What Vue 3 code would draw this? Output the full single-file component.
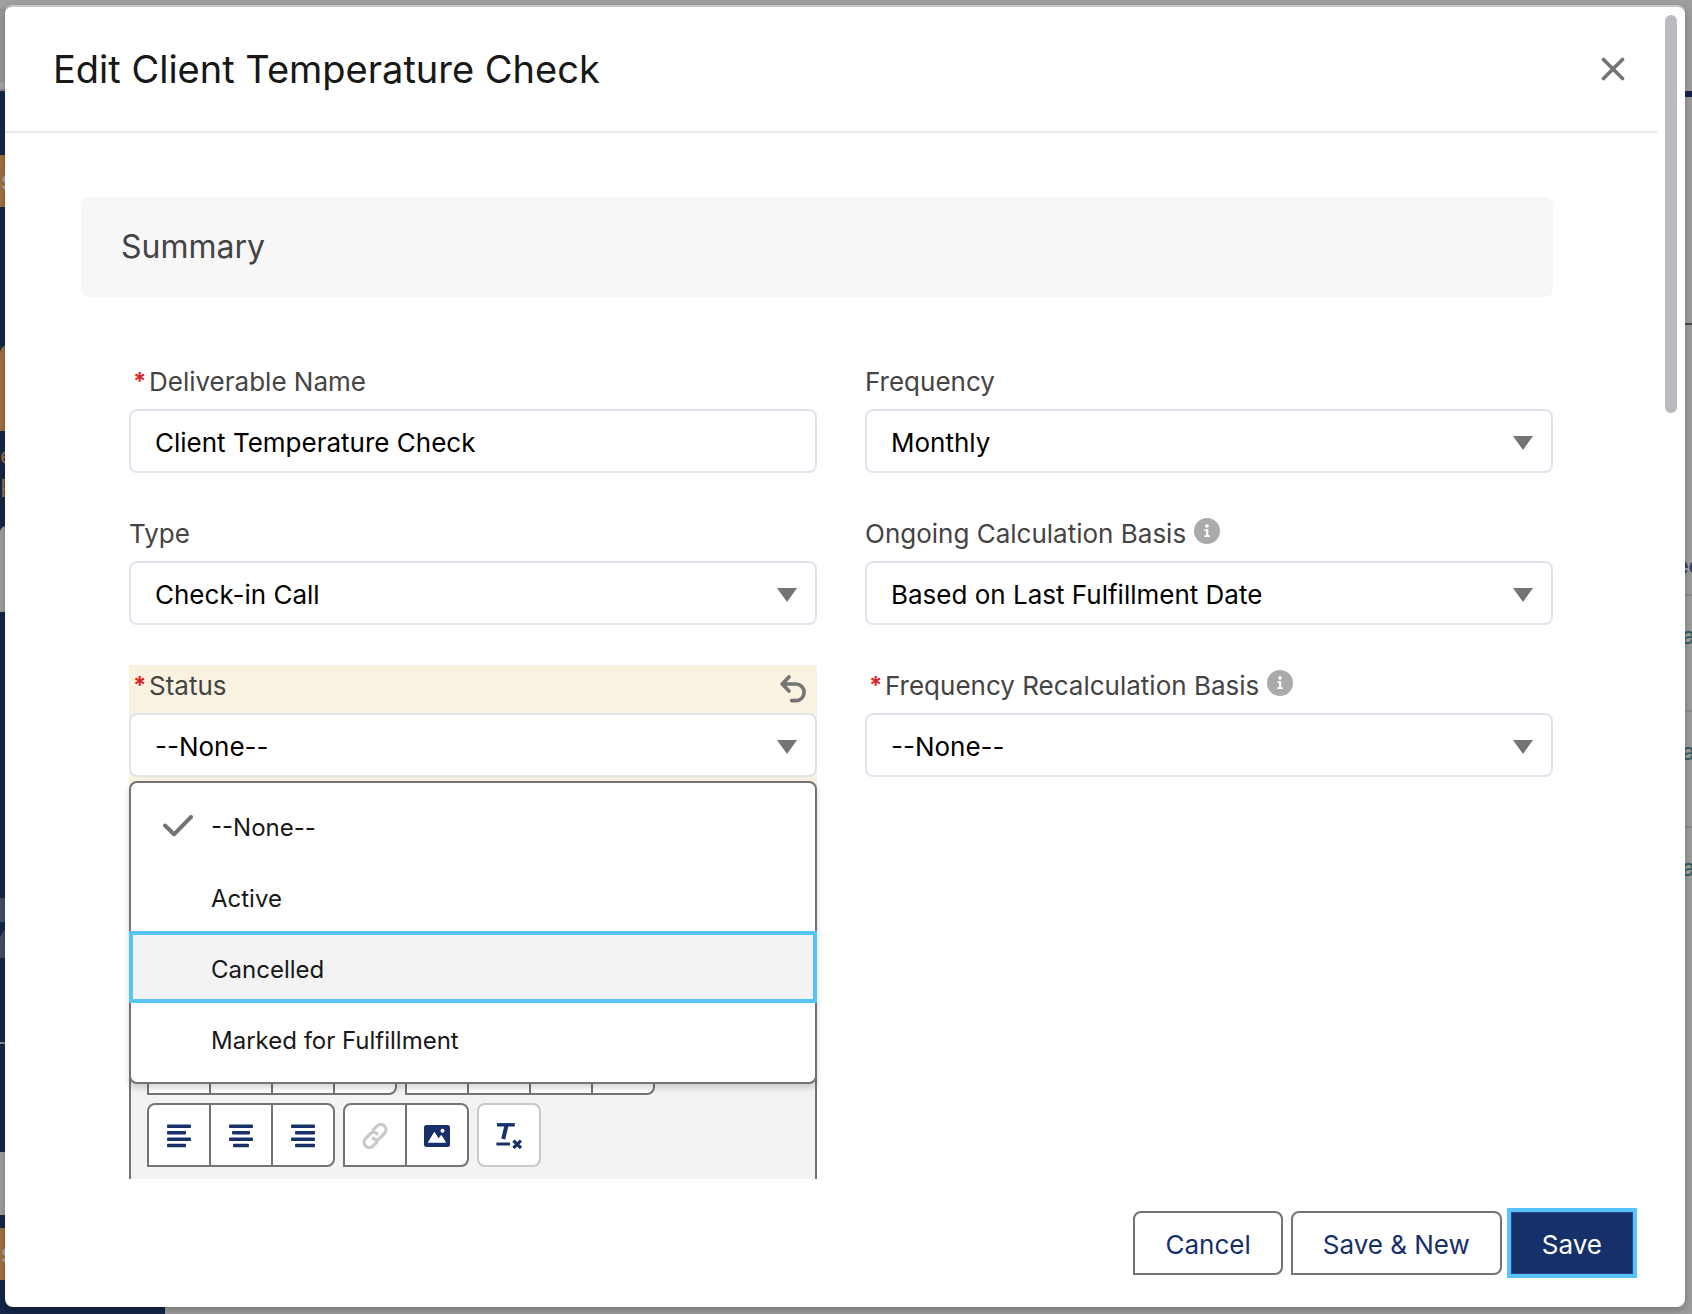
<script setup>
import { ref } from 'vue'

const deliverableName = ref('Client Temperature Check')
const frequency = ref('Monthly')
const type = ref('Check-in Call')
const basis = ref('Based on Last Fulfillment Date')
const status = ref('--None--')
const recalculation = ref('--None--')

const statusOptions = ['--None--', 'Active', 'Cancelled', 'Marked for Fulfillment']
const focusedOption = ref('Cancelled')

const alignments = [
  { name: 'Align left', bars: [[0, 24], [0, 19], [0, 24], [0, 19]] },
  { name: 'Align center', bars: [[0, 24], [3, 18], [0, 24], [4, 16]] },
  { name: 'Align right', bars: [[0, 24], [4, 20], [0, 24], [4, 20]] },
]
const textGroups = [
  ['Bold', 'Italic', 'Underline', 'Strikethrough'],
  ['Bulleted list', 'Numbered list', 'Indent', 'Outdent'],
]
</script>

<template>
  <div class="page">
    <div class="backdrop" aria-hidden="true">
      <div class="side">
        <i class="b top"></i>
        <i class="b topline"></i>
        <i class="b header"></i>
        <i class="b under"></i>
        <i class="b navy h64"></i>
        <i class="b orange tag">s</i>
        <i class="b navy h138"></i>
        <i class="b orange logo"></i>
        <i class="b navy word">e</i>
        <i class="b navy word tall">P</i>
        <i class="b card"></i>
        <i class="b navy h286"></i>
        <i class="b slate"></i>
        <i class="b navy h3"></i>
        <i class="b slate peak"></i>
        <i class="b navy h84"></i>
        <i class="b hair"></i>
        <i class="b navy h108"></i>
        <i class="b grey"></i>
        <i class="b navy h13"></i>
        <i class="b orange tag">s</i>
        <i class="b navy rest"></i>
      </div>
      <div class="other">
        <i class="o head"></i>
        <i class="o bar"></i>
        <i class="o first"></i>
        <i class="o blank"></i>
        <i class="o heading">ec</i>
        <i class="o row">a</i>
        <i class="o row">a</i>
        <i class="o row last">a</i>
      </div>
    </div>

    <form class="modal" role="dialog" aria-labelledby="title" @submit.prevent>
      <header class="modal-head">
        <h1 id="title">Edit Client Temperature Check</h1>
        <button type="button" class="close" aria-label="Close">
          <svg viewBox="0 0 24 24" width="24" height="24"><path d="M2.5 2.5l19 19M21.5 2.5l-19 19" fill="none" stroke="#747474" stroke-width="3.6" stroke-linecap="round" /></svg>
        </button>
      </header>

      <div class="modal-body">
        <h2 class="section">Summary</h2>
        <div class="fields">
          <div class="field">
            <div class="label-row required">
              <abbr>*</abbr><label for="name">Deliverable Name</label>
            </div>
            <input id="name" v-model="deliverableName" type="text" class="control" />
          </div>

          <div class="field">
            <div class="label-row"><label for="frequency">Frequency</label></div>
            <div class="picker">
              <select id="frequency" v-model="frequency" class="control"><option>Monthly</option></select>
              <svg class="arrow" viewBox="0 0 20 14" width="20" height="14"><path d="M0 0h20L10 14z" /></svg>
            </div>
          </div>

          <div class="field">
            <div class="label-row"><label for="type">Type</label></div>
            <div class="picker">
              <select id="type" v-model="type" class="control"><option>Check-in Call</option></select>
              <svg class="arrow" viewBox="0 0 20 14" width="20" height="14"><path d="M0 0h20L10 14z" /></svg>
            </div>
          </div>

          <div class="field">
            <div class="label-row">
              <label for="basis">Ongoing Calculation Basis</label>
              <svg class="info" viewBox="0 0 26 26" width="26" height="26"><circle cx="13" cy="13" r="13" fill="#aaa" /><circle cx="13" cy="8" r="1.8" fill="#fff" /><path d="M10.5 11.3h3.8v6h1.6v1.7h-5.600v-1.7h1.7v-4.3h-1.5z" fill="#fff" /></svg>
            </div>
            <div class="picker">
              <select id="basis" v-model="basis" class="control"><option>Based on Last Fulfillment Date</option></select>
              <svg class="arrow" viewBox="0 0 20 14" width="20" height="14"><path d="M0 0h20L10 14z" /></svg>
            </div>
          </div>

          <div class="field changed">
            <div class="label-row required">
              <abbr>*</abbr><label for="status">Status</label>
              <button type="button" class="undo" aria-label="Undo">
                <svg viewBox="0 0 26 28" width="26" height="28"><path d="M9 2L2.2 9 9 16M2.8 9H16a8 8.2 0 0 1 0 16.6h-4.4" fill="none" stroke="#747474" stroke-width="3.6" stroke-linecap="round" stroke-linejoin="round" /></svg>
              </button>
            </div>
            <div class="picker">
              <select id="status" v-model="status" class="control">
                <option v-for="option in statusOptions" :key="option">{{ option }}</option>
              </select>
              <svg class="arrow" viewBox="0 0 20 14" width="20" height="14"><path d="M0 0h20L10 14z" /></svg>
              <ul class="menu" role="listbox" aria-label="Status">
                <li
                  v-for="option in statusOptions"
                  :key="option"
                  role="option"
                  :aria-selected="option === status"
                  :class="{ focused: option === focusedOption }"
                  @click="status = option"
                >
                  <span class="tick">
                    <svg v-if="option === status" viewBox="0 0 30 22" width="30" height="22"><path d="M2 10.5l9 8.8L28 2" fill="none" stroke="#747474" stroke-width="4" stroke-linecap="round" stroke-linejoin="round" /></svg>
                  </span>
                  {{ option }}
                </li>
              </ul>
            </div>
          </div>

          <div class="field">
            <div class="label-row required">
              <abbr>*</abbr><label for="recalc">Frequency Recalculation Basis</label>
              <svg class="info" viewBox="0 0 26 26" width="26" height="26"><circle cx="13" cy="13" r="13" fill="#aaa" /><circle cx="13" cy="8" r="1.8" fill="#fff" /><path d="M10.5 11.3h3.8v6h1.6v1.7h-5.600v-1.7h1.7v-4.3h-1.5z" fill="#fff" /></svg>
            </div>
            <div class="picker">
              <select id="recalc" v-model="recalculation" class="control"><option>--None--</option></select>
              <svg class="arrow" viewBox="0 0 20 14" width="20" height="14"><path d="M0 0h20L10 14z" /></svg>
            </div>
          </div>

          <div class="editor">
            <div class="tools">
              <div v-for="(group, i) in textGroups" :key="i" class="group">
                <button v-for="name in group" :key="name" type="button" :aria-label="name"></button>
              </div>
            </div>
            <div class="tools">
              <div class="group">
                <button v-for="a in alignments" :key="a.name" type="button" :aria-label="a.name">
                  <svg viewBox="0 0 24 24" width="24" height="24">
                    <rect v-for="(bar, i) in a.bars" :key="i" :x="bar[0]" :y="0.6 + i * 6.4" :width="bar[1]" height="3.5" rx="1" />
                  </svg>
                </button>
              </div>
              <div class="group">
                <button type="button" aria-label="Link" disabled>
                  <svg viewBox="0 0 26 26" width="26" height="26"><g fill="none" stroke="#c9c9c9" stroke-width="3.2" stroke-linecap="round"><path d="M11.2 6.8l3.7-3.700a5.1 5.1 0 0 1 7.600 7.200l-4.600 4.800a5 5 0 0 1-6.900.2" /><path d="M14.800 19.200l-3.700 3.700a5.100 5.100 0 0 1-7.600-7.200l4.600-4.800a5 5 0 0 1 6.900-.2" /></g></svg>
                </button>
                <button type="button" aria-label="Image">
                  <svg viewBox="0 0 26 22" width="26" height="22"><path fill-rule="evenodd" d="M2.5 0h21A2.5 2.5 0 0 1 26 2.500v17a2.500 2.500 0 0 1-2.500 2.500h-21A2.500 2.500 0 0 1 0 19.500v-17A2.500 2.500 0 0 1 2.500 0zM18.500 3.800a2 2 0 1 0 .01 0zM4.600 17.800h16.800q.9 0 .4-.9l-4-6.400q-.6-.8-1.200 0l-2 2.800-3.600-5.800q-.6-.8-1.200 0L4.100 16.900q-.4.9.5.9z" /></svg>
                </button>
              </div>
              <div class="group">
                <button type="button" class="light" aria-label="Remove formatting">
                  <svg viewBox="0 0 26 26" width="26" height="26"><g fill="none" stroke="#16306a" stroke-linecap="butt"><path d="M1 1.800h17.800" stroke-width="3.400" /><path d="M10.600 2L7.200 16" stroke-width="4" /><path d="M.4 21h13.600" stroke-width="3" /><path d="M17.400 17.600l7.600 7.400M25 17.600l-7.600 7.400" stroke-width="3.200" /></g></svg>
                </button>
              </div>
            </div>
            <div class="canvas"></div>
          </div>
        </div>
      </div>

      <footer class="modal-foot">
        <button type="button" class="btn">Cancel</button>
        <button type="button" class="btn">Save &amp; New</button>
        <button type="submit" class="btn primary">Save</button>
      </footer>
      <span class="scrollbar" aria-hidden="true"></span>
    </form>
  </div>
</template>

<style>
body {
  margin: 0;
  overflow: hidden;
}
</style>

<style scoped>
* {
  box-sizing: border-box;
}
.page {
  position: relative;
  height: 100vh;
  padding: 5px 7px 7px 5px;
  background: #a0a0a0;
  font-family: Inter, "Liberation Sans", sans-serif;
  font-size: 26px;
  color: #444;
}

/* Dimmed page behind the dialog */
.backdrop {
  position: absolute;
  inset: 0;
  display: flex;
  justify-content: space-between;
  overflow: hidden;
}
.side {
  width: 165px;
  display: flex;
  flex-direction: column;
  background: linear-gradient(#a0a0a0 91px, #162648 91px);
}
.b, .o {
  display: block;
  flex: none;
  font-style: normal;
  overflow: hidden;
}
.navy { background: #162648; }
.orange { background: #a07043; }
.slate { background: #444f66; height: 24px; }
.top { height: 9px; }
.topline { height: 2px; background: #8f8f8f; }
.header { height: 71px; background: #989898; }
.under { height: 9px; background: #a4a4a4; border-bottom: 2px solid #8c8c8c; }
.h64 { height: 64px; }
.tag { height: 52px; padding-left: 1px; line-height: 52px; color: #b0aaa4; font-weight: 600; }
.h138 { height: 138px; }
.logo { height: 86px; border-radius: 8px 0 0 0; }
.word { height: 38px; line-height: 50px; font-size: 24px; color: #a07043; }
.tall { height: 57px; line-height: 40px; }
.card { height: 86px; background: #a0a0a0; border-top-left-radius: 6px; }
.h286 { height: 286px; }
.h3 { height: 3px; }
.peak { height: 33px; clip-path: polygon(0 12px, 5px 4px, 100% 0, 100% 100%, 0 100%); }
.h84 { height: 84px; }
.hair { height: 2px; background: #8a8d94; }
.h108 { height: 108px; }
.grey { height: 63px; background: #a0a0a0; }
.h13 { height: 13px; }
.rest { flex: 1; }

.other {
  width: 7px;
  display: flex;
  flex-direction: column;
  background: #9d9d9d;
}
.head { height: 91px; }
.bar { height: 6px; background: #122550; }
.first { height: 228px; border-bottom: 2px solid #4c4c4c; }
.blank { height: 205px; }
.heading, .row {
  display: flex;
  justify-content: center;
  height: 116px;
  border-bottom: 2px solid #8c8c8c;
  line-height: 80px;
  font-size: 24px;
  color: #2b5b66;
}
.heading { height: 66px; line-height: 72px; color: #34456e; font-weight: 600; }
.last { border: 0; }

/* Dialog */
.modal {
  position: relative;
  height: 100%;
  display: flex;
  flex-direction: column;
  background: #fff;
  border-top: 2px solid #c8c8c8;
  border-radius: 8px;
  box-shadow: 0 4px 8px rgba(0, 0, 0, 0.25);
}
.modal-head {
  flex: none;
  display: flex;
  align-items: center;
  justify-content: space-between;
  height: 126px;
  margin-right: 28px;
  padding: 0 26px 0 48px;
  border-bottom: 2px solid #e8e8e8;
}
h1 {
  margin: 0;
  font-size: 38px;
  font-weight: 400;
  line-height: 48px;
  color: #181818;
}
.close, .undo {
  display: flex;
  padding: 6px;
  border: 0;
  background: none;
}
.modal-body {
  flex: 1;
  min-height: 0;
  overflow: hidden;
  padding: 64px 132px 0 76px;
}
.section {
  margin: 0 0 64px;
  padding: 0 40px;
  line-height: 100px;
  border-radius: 8px;
  background: #f7f7f7;
  font-size: 32px;
  font-weight: 400;
}
.fields {
  display: grid;
  grid-template-columns: 1fr 1fr;
  gap: 32px 48px;
  margin-left: 48px;
}
.field {
  height: 120px;
}
.changed {
  background: #faf2e0;
}
.label-row {
  display: flex;
  align-items: center;
  height: 48px;
  padding-bottom: 6px;
  line-height: 40px;
}
.required {
  padding-left: 4px;
}
abbr {
  width: 16px;
  color: #d62a2a;
  font-size: 24px;
  font-weight: 700;
}
.info {
  margin: 0 0 6px 8px;
}
.undo {
  margin: 6px 5px 0 auto;
}
.control {
  display: block;
  width: 100%;
  height: 64px;
  margin: 0;
  padding: 2px 24px 0;
  border: 2px solid #dfe3ec;
  border-radius: 8px;
  background: #fff;
  color: #000;
  font: inherit;
  outline: 0;
  appearance: none;
}
.picker {
  position: relative;
}
.arrow {
  position: absolute;
  top: 27px;
  right: 20px;
  fill: #747474;
  pointer-events: none;
}
.menu {
  position: absolute;
  z-index: 1;
  top: 68px;
  left: 0;
  right: 0;
  display: flex;
  flex-direction: column;
  gap: 3px;
  margin: 0;
  padding: 8px 0 10px;
  list-style: none;
  border: 2px solid #747474;
  border-radius: 8px;
  background: #fff;
  box-shadow: 0 4px 6px rgba(0, 0, 0, 0.16);
  color: #181818;
  font-size: 24px;
}
.menu li {
  display: flex;
  align-items: center;
  height: 68px;
  padding: 4px 24px 0 32px;
}
.menu .focused {
  background: #f3f3f3;
  outline: 4px solid #57c4f9;
  outline-offset: -2px;
}
.tick {
  display: flex;
  width: 48px;
  padding-bottom: 2px;
}

/* Rich text editor, mostly covered by the open list */
.editor {
  display: flex;
  flex-direction: column;
  gap: 8px;
  margin-top: 196px;
  padding: 16px;
  border: 2px solid #747474;
  background: #f3f3f3;
}
.tools {
  display: flex;
  gap: 8px;
}
.group {
  display: flex;
}
.group button {
  display: flex;
  align-items: center;
  justify-content: center;
  width: 64px;
  height: 64px;
  padding: 2px 0 0;
  border: 2px solid #747474;
  background: #fff;
  fill: #16306a;
}
.group button + button {
  margin-left: -2px;
}
.group button:first-child {
  border-top-left-radius: 8px;
}
.group button:last-child {
  border-top-right-radius: 8px;
  border-bottom-right-radius: 8px;
}
.group .light {
  border-color: #c9c9c9;
  border-radius: 8px;
}
.canvas {
  height: 200px;
}

.modal-foot {
  flex: none;
  display: flex;
  justify-content: flex-end;
  gap: 8px;
  padding: 32px 51px;
}
.btn {
  height: 64px;
  padding: 2px 30px 0;
  border: 2px solid #747474;
  border-radius: 8px 8px 8px 0;
  background: #fff;
  color: #16306a;
  font: inherit;
}
.primary {
  border-color: #2c4688;
  border-radius: 0;
  background: #16306a;
  color: #fff;
  outline: 4px solid #57c4f9;
  outline-offset: -1px;
}
.scrollbar {
  position: absolute;
  top: 8px;
  right: 8px;
  width: 12px;
  height: 398px;
  border-radius: 6px;
  background: #babac0;
}
</style>
